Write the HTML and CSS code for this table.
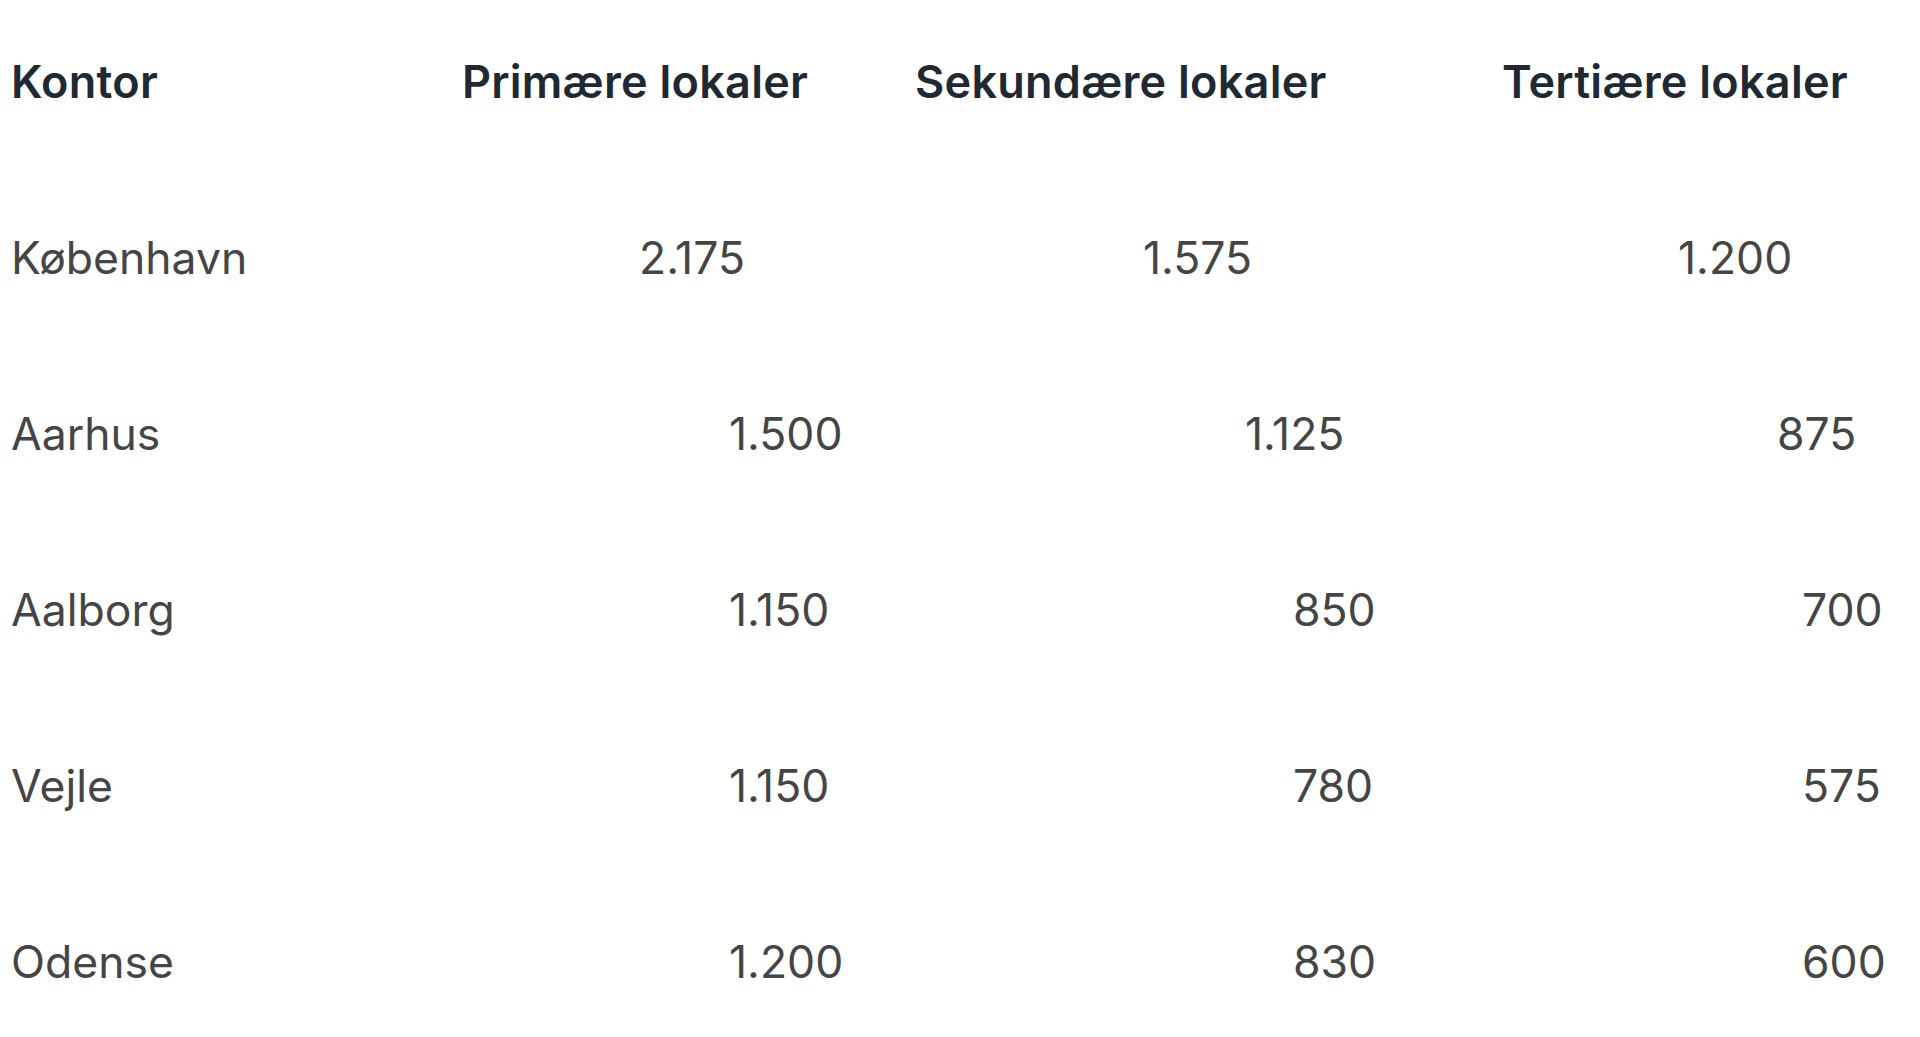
FILE: index.html
```html
<!DOCTYPE html>
<html lang="da">
<head>
<meta charset="utf-8">
<title>Kontorlokaler</title>
<link rel="stylesheet" href="styles.css">
</head>
<body>
<div class="table">
  <div class="row row-head">
    <div class="cell">Kontor</div>
    <div class="cell">Primære lokaler</div>
    <div class="cell">Sekundære lokaler</div>
    <div class="cell">Tertiære lokaler</div>
  </div>
  <div class="row row-a">
    <div class="cell">København</div>
    <div class="cell">2.175</div>
    <div class="cell">1.575</div>
    <div class="cell">1.200</div>
  </div>
  <div class="row row-b">
    <div class="cell">Aarhus</div>
    <div class="cell">1.500</div>
    <div class="cell">1.125</div>
    <div class="cell">875</div>
  </div>
  <div class="row row-c">
    <div class="cell">Aalborg</div>
    <div class="cell">1.150</div>
    <div class="cell">850</div>
    <div class="cell">700</div>
  </div>
  <div class="row row-c">
    <div class="cell">Vejle</div>
    <div class="cell">1.150</div>
    <div class="cell">780</div>
    <div class="cell">575</div>
  </div>
  <div class="row row-c">
    <div class="cell">Odense</div>
    <div class="cell">1.200</div>
    <div class="cell">830</div>
    <div class="cell">600</div>
  </div>
</div>
</body>
</html>
```

FILE: styles.css
```css
html, body {
  margin: 0;
  padding: 0;
  background: #ffffff;
}

body {
  font-family: Inter, "Noto Sans", "Liberation Sans", sans-serif;
  font-size: 44.5px;
  color: #454545;
}

.table {
  display: flex;
  flex-direction: column;
  padding: 55px 0 0 11px;
}

.row {
  display: grid;
  height: 176px;
  line-height: 54px;
  white-space: nowrap;
}

.row:last-child {
  height: auto;
}

.row-head {
  grid-template-columns: 451px 453px 587px 1fr;
  font-size: 45px;
  font-weight: 600;
  letter-spacing: 0.25px;
  color: #1f2933;
}

.row-a {
  grid-template-columns: 628px 504px 535px 1fr;
}

.row-b {
  grid-template-columns: 718px 516px 532px 1fr;
}

.row-c {
  grid-template-columns: 718px 564px 509px 1fr;
}
```
